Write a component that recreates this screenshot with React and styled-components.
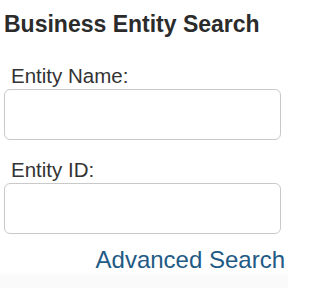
import styled, { createGlobalStyle } from "styled-components";

const GlobalStyle = createGlobalStyle`
  html, body {
    margin: 0;
    padding: 0;
    background: #ffffff;
    font-family: "Liberation Sans", Arial, sans-serif;
  }
`;

const Panel = styled.div`
  width: 288px;
  height: 288px;
  display: flex;
  flex-direction: column;
  overflow: hidden;
  background: linear-gradient(to bottom, #ffffff 0, #ffffff 271px, #fafafa 276px, #f9f9f9 100%);
`;

const Title = styled.h2`
  margin: 13px 0 0 4px;
  font-size: 23px;
  line-height: 23px;
  font-weight: 700;
  color: #2b2b2b;
  white-space: nowrap;
`;

const Field = styled.div`
  display: flex;
  flex-direction: column;
  margin-top: ${(p) => p.$gap}px;
`;

const Label = styled.label`
  margin-left: 11px;
  font-size: 20.5px;
  line-height: 20px;
  color: #333333;
`;

const Input = styled.input`
  box-sizing: border-box;
  margin: 3px 0 0 4px;
  width: 277px;
  height: 51px;
  border: 1px solid #c9c9c9;
  border-radius: 6px;
  background: #ffffff;
  outline: none;
  font-size: 18px;
  padding: 0 10px;
`;

const Links = styled.div`
  display: flex;
  justify-content: flex-end;
  padding-right: 3px;
  margin-top: 14px;
`;

const AdvancedLink = styled.a`
  font-size: 24px;
  line-height: 24px;
  color: #225a85;
  text-decoration: none;
  white-space: nowrap;
`;

export default function App() {
  return (
    <>
      <GlobalStyle />
      <Panel>
        <Title>Business Entity Search</Title>
        <Field $gap={30}>
          <Label>Entity Name:</Label>
          <Input type="text" />
        </Field>
        <Field $gap={20}>
          <Label>Entity ID:</Label>
          <Input type="text" />
        </Field>
        <Links>
          <AdvancedLink href="#">Advanced Search</AdvancedLink>
        </Links>
      </Panel>
    </>
  );
}
